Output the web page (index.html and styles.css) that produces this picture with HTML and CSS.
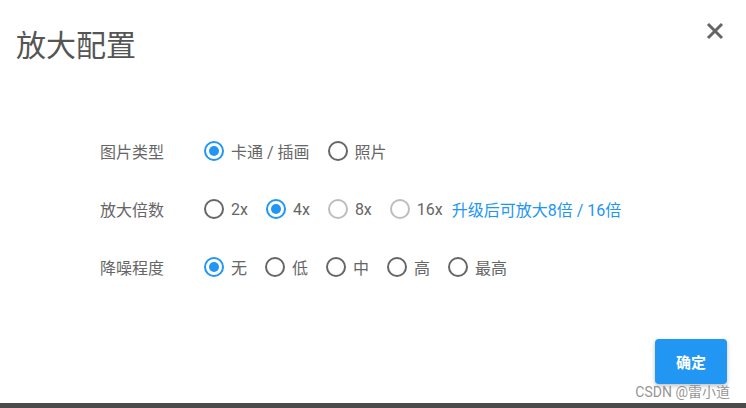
FILE: index.html
```html
<!DOCTYPE html>
<html lang="zh">
<head>
<meta charset="utf-8">
<link rel="stylesheet" href="styles.css">
</head>
<body>
<div class="dialog">
  <div class="header">
    <h1 class="title">放大配置</h1>
    <button class="close" aria-label="close">
      <svg width="18" height="18" viewBox="0 0 18 18"><path d="M2 2L16 16M16 2L2 16" stroke="#666" stroke-width="3" stroke-linecap="butt"/></svg>
    </button>
  </div>
  <div class="form">
    <div class="row">
      <div class="label">图片类型</div>
      <div class="options">
        <label class="opt"><span class="radio checked"></span><span>卡通 / 插画</span></label>
        <label class="opt"><span class="radio"></span><span>照片</span></label>
      </div>
    </div>
    <div class="row">
      <div class="label">放大倍数</div>
      <div class="options">
        <label class="opt"><span class="radio"></span><span>2x</span></label>
        <label class="opt"><span class="radio checked"></span><span>4x</span></label>
        <label class="opt disabled"><span class="radio"></span><span>8x</span></label>
        <label class="opt disabled"><span class="radio"></span><span>16x</span></label>
        <a class="upgrade">升级后可放大8倍 / 16倍</a>
      </div>
    </div>
    <div class="row">
      <div class="label">降噪程度</div>
      <div class="options">
        <label class="opt"><span class="radio checked"></span><span>无</span></label>
        <label class="opt"><span class="radio"></span><span>低</span></label>
        <label class="opt"><span class="radio"></span><span>中</span></label>
        <label class="opt"><span class="radio"></span><span>高</span></label>
        <label class="opt"><span class="radio"></span><span>最高</span></label>
      </div>
    </div>
  </div>
  <div class="footer">
    <button class="ok">确定</button>
  </div>
  <div class="watermark">CSDN @雷小道</div>
</div>
</body>
</html>
```

FILE: styles.css
```css
* { box-sizing: border-box; }
html, body { margin: 0; padding: 0; }
body {
  width: 746px;
  height: 408px;
  background: #4b4b4b;
  overflow: hidden;
  font-family: Roboto, "Noto Sans CJK SC", "Noto Sans", sans-serif;
}
.dialog {
  position: relative;
  width: 746px;
  height: 403px;
  background: #fff;
  display: flex;
  flex-direction: column;
}
.header {
  display: flex;
  justify-content: space-between;
  align-items: flex-start;
  padding: 0 22px 0 16px;
}
.title {
  margin: 26px 0 0 0;
  font-size: 30px;
  line-height: 40px;
  font-weight: 400;
  color: #555;
}
.close {
  margin-top: 22px;
  padding: 0;
  border: 0;
  background: none;
  width: 18px;
  height: 18px;
  display: block;
}
.close svg { display: block; }
.form {
  margin-top: 65px;
  padding-left: 100px;
  display: flex;
  flex-direction: column;
  gap: 18px;
}
.row {
  display: flex;
  align-items: center;
  height: 40px;
}
.label {
  width: 104px;
  font-size: 16px;
  color: #666;
}
.options {
  display: flex;
  align-items: center;
  gap: 18px;
}
.opt {
  display: flex;
  align-items: center;
  gap: 7px;
  font-size: 16px;
  color: #666;
}
.radio {
  width: 20px;
  height: 20px;
  border: 2px solid #666;
  border-radius: 50%;
  display: flex;
  align-items: center;
  justify-content: center;
}
.radio.checked { border-color: #2196f3; }
.radio.checked::after {
  content: "";
  width: 10px;
  height: 10px;
  border-radius: 50%;
  background: #2196f3;
}
.opt.disabled .radio { border-color: #bdbdbd; }
.upgrade {
  margin-left: -9px;
  font-size: 16px;
  color: #2196f3;
}
.footer {
  margin-top: auto;
  display: flex;
  justify-content: flex-end;
  padding: 0 19px 19px 0;
}
.ok {
  width: 72px;
  height: 45px;
  border: 0;
  border-radius: 4px;
  background: #2196f3;
  color: #fff;
  font-family: inherit;
  font-size: 15px;
  font-weight: 700;
  box-shadow: 0 2px 4px rgba(0,0,0,0.25);
}
.watermark {
  position: absolute;
  right: 16px;
  bottom: 2px;
  font-size: 14px;
  color: rgba(120,120,120,0.8);
}
```
